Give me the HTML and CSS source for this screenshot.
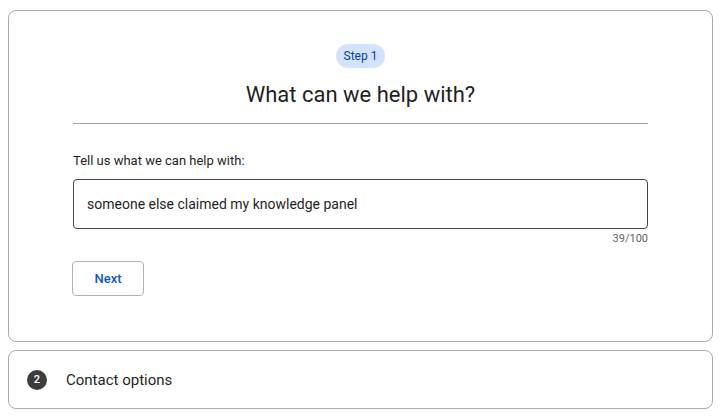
FILE: index.html
```html
<!DOCTYPE html>
<html lang="en">
<head>
<meta charset="utf-8">
<title>What can we help with?</title>
<link rel="stylesheet" href="styles.css">
</head>
<body>
<section class="card step-card">
  <div class="step-head">
    <span class="pill">Step 1</span>
    <h1 class="title">What can we help with?</h1>
  </div>
  <hr class="divider">
  <label class="label" for="q">Tell us what we can help with:</label>
  <div class="input-box" id="q">someone else claimed my knowledge panel</div>
  <div class="counter">39/100</div>
  <button class="btn">Next</button>
</section>
<section class="card collapsed">
  <span class="num">2</span>
  <span class="collapsed-title">Contact options</span>
</section>
</body>
</html>
```
FILE: styles.css
```css
* { box-sizing: border-box; }
body {
  margin: 10px 8px 0 8px;
  font-family: Roboto, "Noto Sans", Arial, sans-serif;
  color: #1f1f1f;
  background: #fff;
}
.card {
  border: 1px solid #aaaaaa;
  border-radius: 8px;
  background: #fff;
}
.step-card {
  padding: 33px 64px 45px;
  display: flex;
  flex-direction: column;
}
.step-head {
  display: flex;
  flex-direction: column;
  align-items: center;
}
.pill {
  display: inline-flex;
  align-items: center;
  height: 24px;
  padding: 0 8px;
  border-radius: 12px;
  background: #d3e3fd;
  color: #0842a0;
  font-size: 12px;
  line-height: 16px;
}
.title {
  margin: 12px 0 0;
  font-size: 22px;
  font-weight: 400;
  line-height: 30px;
  color: #1f1f1f;
}
.divider {
  margin: 13px 0 0;
  border: 0;
  border-top: 1px solid #9e9e9e;
  height: 0;
}
.label {
  margin-top: 28px;
  font-size: 13px;
  line-height: 18px;
  color: #1f1f1f;
}
.input-box {
  margin-top: 9px;
  height: 50px;
  border: 1px solid #444746;
  border-radius: 4px;
  padding: 0 13px;
  display: flex;
  align-items: center;
  font-size: 14px;
  color: #1f1f1f;
}
.counter {
  margin-top: 3px;
  text-align: right;
  font-size: 11px;
  line-height: 14px;
  color: #5f6368;
}
.btn {
  align-self: flex-start;
  margin-top: 15px;
  width: 72px;
  height: 35px;
  border: 1px solid #b3b3b3;
  border-radius: 4px;
  background: #fff;
  color: #0b57d0;
  font-family: inherit;
  font-size: 13px;
  font-weight: 500;
  padding: 0;
  margin-left: -1px;
}
.collapsed {
  margin-top: 8px;
  height: 59px;
  display: flex;
  align-items: center;
  padding-left: 18px;
}
.num {
  width: 20px;
  height: 20px;
  border-radius: 50%;
  background: #3c3c3c;
  color: #fff;
  font-size: 11px;
  font-weight: 500;
  display: inline-flex;
  align-items: center;
  justify-content: center;
}
.collapsed-title {
  margin-left: 19px;
  font-size: 15px;
  font-weight: 400;
  color: #1f1f1f;
}
```
